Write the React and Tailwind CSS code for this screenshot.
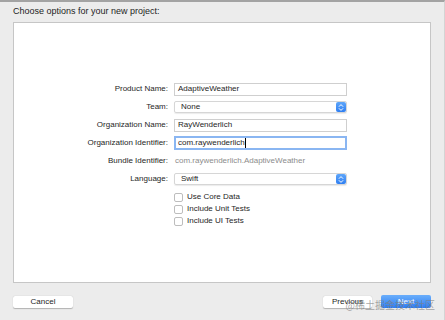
function Stepper() {
  return (
    <span className="flex h-full w-[10px] items-center justify-center rounded-[2px] bg-gradient-to-b from-[#5ea6fa] to-[#2f7ff2]">
      <svg width="6" height="9" viewBox="0 0 6 9" fill="none" stroke="white" strokeWidth="1" strokeLinecap="round" strokeLinejoin="round">
        <path d="M1.2 3.4 L3 1.6 L4.8 3.4" />
        <path d="M1.2 5.6 L3 7.4 L4.8 5.6" />
      </svg>
    </span>
  );
}

function Row({ label, children }) {
  return (
    <div className="flex h-[18px] items-center">
      <div className="w-[155px] pr-[1px] text-right text-[#262626]">{label}</div>
      <div className="ml-[5px] w-[173px]">{children}</div>
    </div>
  );
}

function Check({ label }) {
  return (
    <div className="flex h-[12px] items-center pl-[160px]">
      <span className="h-[9px] w-[9px] rounded-[2px] border border-[#bdbdbd] bg-white" />
      <span className="ml-[4px] text-[#262626]">{label}</span>
    </div>
  );
}

export default function App() {
  return (
    <div
      className="relative flex h-[320px] w-[445px] flex-col border-t-2 border-r border-t-[#a3a3a3] border-r-[#d4d4d4] bg-[#ececec] px-[13px] text-[8px]"
      style={{ fontFamily: '"Liberation Sans", Arial, sans-serif' }}
    >
      {/* heading */}
      <div className="flex h-[20px] items-center text-[9px] text-[#1e1e1e]">Choose options for your new project:</div>

      {/* white options panel */}
      <div className="h-[261px] border border-[#c6c6c6] bg-white pt-[57px]">
        <Row label="Product Name:">
          <div className="flex h-[13px] items-center border border-[#cfcfcf] pl-[3px] text-[#1e1e1e]">AdaptiveWeather</div>
        </Row>
        <Row label="Team:">
          <div className="flex h-[12px] items-center justify-between rounded-[2px] border border-[#d6d6d6] pl-[6px] text-[#1e1e1e] shadow-[0_1px_1px_rgba(0,0,0,0.08)]">
            None
            <Stepper />
          </div>
        </Row>
        <Row label="Organization Name:">
          <div className="flex h-[13px] items-center border border-[#cfcfcf] pl-[3px] text-[#1e1e1e]">RayWenderlich</div>
        </Row>
        <Row label="Organization Identifier:">
          <div className="flex h-[14px] items-center border-2 border-[#8ab6f2] pl-[2px] text-[#1e1e1e]">
            com.raywenderlich
            <span className="h-[10px] w-px bg-black" />
          </div>
        </Row>
        <Row label="Bundle Identifier:">
          <div className="pl-[1px] text-[#8c8c8c]">com.raywenderlich.AdaptiveWeather</div>
        </Row>
        <Row label="Language:">
          <div className="flex h-[12px] items-center justify-between rounded-[2px] border border-[#d6d6d6] pl-[6px] text-[#1e1e1e] shadow-[0_1px_1px_rgba(0,0,0,0.08)]">
            Swift
            <Stepper />
          </div>
        </Row>
        <div className="mt-[3px]">
          <Check label="Use Core Data" />
          <Check label="Include Unit Tests" />
          <Check label="Include UI Tests" />
        </div>
      </div>

      {/* buttons */}
      <div className="mt-[12px] flex items-center">
        <button className="h-[12px] w-[60px] rounded-[2px] bg-white text-[8px] text-[#1e1e1e] shadow-[0_0.5px_1px_rgba(0,0,0,0.25)]">Cancel</button>
        <button className="ml-auto h-[12px] w-[49px] rounded-[2px] bg-white text-[8px] text-[#1e1e1e] shadow-[0_0.5px_1px_rgba(0,0,0,0.25)]">Previous</button>
        <button className="ml-[9px] h-[13px] w-[50px] rounded-[2px] bg-gradient-to-b from-[#6aaefb] to-[#2c7cf1] text-[8px] text-white">Next</button>
      </div>

      {/* watermark */}
      <div
        className="absolute bottom-[8px] right-[9px] text-[10px] text-[#7f7f7f]/70"
        style={{ fontFamily: '"Noto Sans CJK SC", sans-serif' }}
      >
        @稀土掘金技术社区
      </div>
    </div>
  );
}
